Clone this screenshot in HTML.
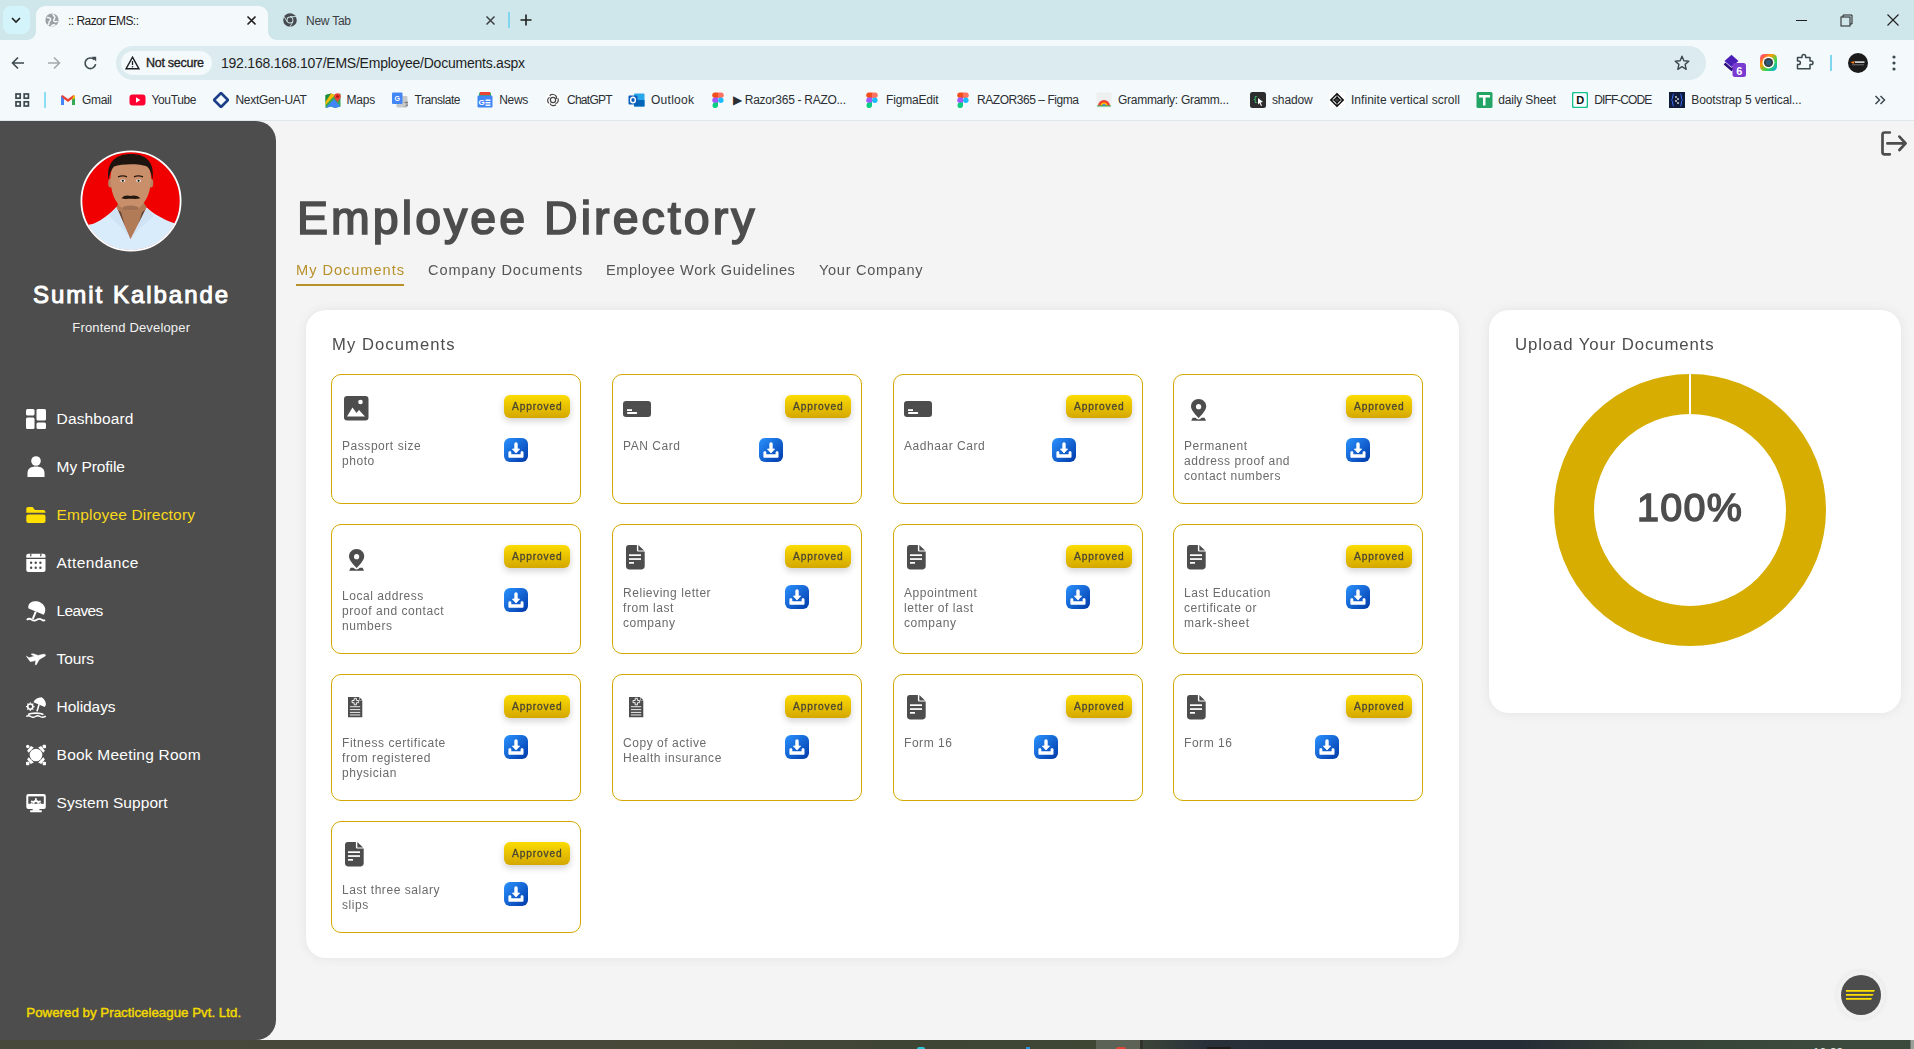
<!DOCTYPE html>
<html><head><meta charset="utf-8"><title>Razor EMS</title><style>
*{margin:0;padding:0;box-sizing:border-box}
html,body{width:1914px;height:1049px;overflow:hidden;background:#f4f4f4}
body{position:relative;font-family:"Liberation Sans",sans-serif}
.t{position:absolute;white-space:nowrap;line-height:1;font-family:"Liberation Sans",sans-serif}
</style></head><body><div id="root" style="position:absolute;left:0;top:0;width:1914px;height:1049px">
<div style="position:absolute;left:0;top:0;width:1914px;height:40px;background:#cfe6eb"></div>
<div style="position:absolute;left:3px;top:6px;width:27px;height:28px;border-radius:8px;background:#d4f4fb"></div>
<svg style="position:absolute;left:9px;top:13px" width="14" height="14" viewBox="0 0 14 14"><path d="M3 5 L7 9 L11 5" fill="none" stroke="#1f1f1f" stroke-width="1.6"/></svg>
<div style="position:absolute;left:36px;top:6px;width:232px;height:34px;border-radius:9px 9px 0 0;background:#f4f9fb"></div>
<div style="position:absolute;left:28px;top:32px;width:8px;height:8px;background:radial-gradient(circle at 0 0, #cfe6eb 7.5px, #f4f9fb 8px)"></div>
<div style="position:absolute;left:268px;top:32px;width:8px;height:8px;background:radial-gradient(circle at 100% 0, #cfe6eb 7.5px, #f4f9fb 8px)"></div>
<svg style="position:absolute;left:45px;top:13px" width="14" height="14" viewBox="0 0 14 14"><circle cx="7" cy="7" r="6.6" fill="#9aa0a6"/><path d="M1.8 4.6 C3.8 4.2 5.8 5 5.6 6.6 C5.4 8 3.6 8.2 4 10 C4.2 11 3.4 11.8 2.6 11.4 M7.8 0.8 C8 2.4 9.6 2.8 9.8 4.2 C10 5.6 8.4 6.4 8.8 7.8 C9.2 9 11 9 12.6 8.4 M6.2 13.2 C7.2 12 9 11.6 10.4 12.4" fill="none" stroke="#f4f9fb" stroke-width="1.5"/></svg>
<span class="t" style="left:68.00px;top:14.74px;font-size:12px;font-weight:400;color:#1f1f1f;letter-spacing:-0.541px;">:: Razor EMS::</span>
<svg style="position:absolute;left:246px;top:15px" width="11" height="11" viewBox="0 0 11 11"><path d="M1.5 1.5 L9.5 9.5 M9.5 1.5 L1.5 9.5" stroke="#1f1f1f" stroke-width="1.6"/></svg>
<svg style="position:absolute;left:283px;top:13px" width="14" height="14" viewBox="0 0 14 14"><circle cx="7" cy="7" r="6.8" fill="#474b4f"/><circle cx="7" cy="7" r="3.4" fill="#cfe6eb"/><circle cx="7" cy="7" r="2.5" fill="#474b4f"/><path d="M7 3.6 L13 3.6" stroke="#cfe6eb" stroke-width="0.9"/><path d="M4.1 8.7 L1.1 3.5" stroke="#cfe6eb" stroke-width="0.9"/><path d="M9.9 8.7 L6.9 13.9" stroke="#cfe6eb" stroke-width="0.9"/></svg>
<span class="t" style="left:306.00px;top:14.74px;font-size:12px;font-weight:400;color:#3c4043;letter-spacing:-0.247px;">New Tab</span>
<svg style="position:absolute;left:485px;top:15px" width="11" height="11" viewBox="0 0 11 11"><path d="M1.5 1.5 L9.5 9.5 M9.5 1.5 L1.5 9.5" stroke="#3c4043" stroke-width="1.5"/></svg>
<div style="position:absolute;left:508px;top:12px;width:2px;height:16px;background:#7fd6ee"></div>
<svg style="position:absolute;left:520px;top:14px" width="12" height="12" viewBox="0 0 12 12"><path d="M6 0.5 V11.5 M0.5 6 H11.5" stroke="#1f1f1f" stroke-width="1.6"/></svg>
<div style="position:absolute;left:1796px;top:20px;width:11px;height:1px;background:#1f1f1f"></div>
<svg style="position:absolute;left:1840px;top:14px" width="13" height="13" viewBox="0 0 13 13"><rect x="1" y="3" width="9" height="9" fill="none" stroke="#1f1f1f" stroke-width="1"/><path d="M3 3 V1 H12 V10 H10" fill="none" stroke="#1f1f1f" stroke-width="1"/></svg>
<svg style="position:absolute;left:1887px;top:14px" width="12" height="12" viewBox="0 0 12 12"><path d="M0.5 0.5 L11.5 11.5 M11.5 0.5 L0.5 11.5" stroke="#1f1f1f" stroke-width="1.1"/></svg>
<div style="position:absolute;left:0;top:40px;width:1914px;height:80px;background:#f4f9fb"></div>
<div style="position:absolute;left:0;top:120px;width:1914px;height:1px;background:#dfe6e9"></div>
<svg style="position:absolute;left:11px;top:56px" width="14" height="14" viewBox="0 0 14 14"><path d="M13 7 H1.5 M7 1.5 L1.5 7 L7 12.5" fill="none" stroke="#3c4a4f" stroke-width="1.6"/></svg>
<svg style="position:absolute;left:47px;top:56px" width="14" height="14" viewBox="0 0 14 14"><path d="M1 7 H12.5 M7 1.5 L12.5 7 L7 12.5" fill="none" stroke="#a3abaf" stroke-width="1.6"/></svg>
<svg style="position:absolute;left:83px;top:56px" width="15" height="15" viewBox="0 0 15 15"><path d="M12.6 8.2 A5.3 5.3 0 1 1 11.2 3.6" fill="none" stroke="#3c4a4f" stroke-width="1.6"/><path d="M8.6 0.8 H13.2 V5.4 Z" fill="#3c4a4f"/></svg>
<div style="position:absolute;left:116px;top:46px;width:1590px;height:34px;border-radius:17px;background:#dcebef"></div>
<div style="position:absolute;left:121px;top:51px;width:91px;height:24px;border-radius:12px;background:#f4f9fb"></div>
<svg style="position:absolute;left:125px;top:56px" width="15" height="14" viewBox="0 0 15 14"><path d="M7.5 1.2 L14 12.8 H1 Z" fill="none" stroke="#1f1f1f" stroke-width="1.4" stroke-linejoin="miter"/><path d="M7.5 5 V9" stroke="#1f1f1f" stroke-width="1.3"/><circle cx="7.5" cy="10.7" r="0.8" fill="#1f1f1f"/></svg>
<span class="t" style="left:146.00px;top:56.92px;font-size:12.5px;font-weight:400;color:#1f1f1f;letter-spacing:-0.273px;-webkit-text-stroke:0.35px #1f1f1f;">Not secure</span>
<span class="t" style="left:221.00px;top:55.95px;font-size:14px;font-weight:400;color:#1f1f1f;letter-spacing:-0.230px;">192.168.168.107/EMS/Employee/Documents.aspx</span>
<svg style="position:absolute;left:1674px;top:55px" width="16" height="16" viewBox="0 0 16 16"><path d="M8 1.2 L9.9 5.8 L14.8 6.2 L11.1 9.4 L12.2 14.3 L8 11.7 L3.8 14.3 L4.9 9.4 L1.2 6.2 L6.1 5.8 Z" fill="none" stroke="#3c4a4f" stroke-width="1.4" stroke-linejoin="round"/></svg>
<svg style="position:absolute;left:1723px;top:54px" width="24" height="24" viewBox="0 0 24 24"><path d="M1.5 7 L8.5 0.8 L15.5 7 L8.5 13 Z" fill="#4a1fb8"/><path d="M1.5 9.5 L8.5 15.5 L12 12.5" fill="none" stroke="#2c0f7a" stroke-width="2.5"/><rect x="9.5" y="9" width="13.5" height="14" rx="2.5" fill="#7a3cd0"/><text x="16.2" y="20.5" font-family="Liberation Sans" font-weight="700" font-size="11" fill="#fff" text-anchor="middle">6</text></svg>
<svg style="position:absolute;left:1760px;top:54px" width="17" height="17" viewBox="0 0 17 17"><defs><linearGradient id="rb" x1="0" y1="0" x2="1" y2="1"><stop offset="0" stop-color="#ff2d95"/><stop offset="0.35" stop-color="#ff9a00"/><stop offset="0.65" stop-color="#32d74b"/><stop offset="1" stop-color="#0aa0ff"/></linearGradient></defs><rect x="0" y="0" width="17" height="17" rx="4.5" fill="url(#rb)"/><circle cx="8.5" cy="8.5" r="6" fill="#fff"/><circle cx="8.5" cy="8.5" r="4.6" fill="#3a3f44"/><circle cx="8.5" cy="8.5" r="2.6" fill="#2b5c7e"/></svg>
<svg style="position:absolute;left:1796px;top:53px" width="18" height="18" viewBox="0 0 18 18"><path d="M1.5 4.5 H6 V3.2 A1.8 1.8 0 0 1 9.6 3.2 V4.5 H14 V8 H15.2 A1.8 1.8 0 0 1 15.2 11.6 H14 V15.8 H1.5 V11.6 H2.6 A1.8 1.8 0 0 0 2.6 8 H1.5 Z" fill="none" stroke="#3c4a4f" stroke-width="1.5" stroke-linejoin="round"/></svg>
<div style="position:absolute;left:1830px;top:55px;width:2px;height:16px;background:#7fd6ee"></div>
<svg style="position:absolute;left:1848px;top:53px" width="20" height="20" viewBox="0 0 20 20"><circle cx="10" cy="10" r="10" fill="#1b1b1b"/><path d="M2.5 9 L7 8 L5.5 11 Z" fill="#f07b24"/><rect x="7" y="8.3" width="9.5" height="1.6" fill="#ddd"/><rect x="4" y="11.5" width="12" height="0.7" fill="#999"/></svg>
<svg style="position:absolute;left:1891px;top:55px" width="6" height="16" viewBox="0 0 6 16"><circle cx="3" cy="2" r="1.6" fill="#3c4a4f"/><circle cx="3" cy="8" r="1.6" fill="#3c4a4f"/><circle cx="3" cy="14" r="1.6" fill="#3c4a4f"/></svg>
<svg style="position:absolute;left:15px;top:93px" width="15" height="14" viewBox="0 0 15 14"><g fill="none" stroke="#3c4a4f" stroke-width="1.7"><rect x="1" y="1" width="4.2" height="4.2"/><rect x="9.2" y="1" width="4.2" height="4.2"/><rect x="1" y="8.8" width="4.2" height="4.2"/><rect x="9.2" y="8.8" width="4.2" height="4.2"/></g></svg>
<div style="position:absolute;left:44px;top:92px;width:2px;height:16px;background:#8ce0f5"></div>
<div style="position:absolute;left:60px;top:92px;width:16px;height:16px"><svg width="16" height="16" viewBox="0 0 16 16"><path d="M1 4 V13 H4 V7 L8 10 L12 7 V13 H15 V4 L13.5 3 L8 7 L2.5 3 Z" fill="#ea4335"/><path d="M1 4 V13 H4 V7 Z" fill="#4285f4"/><path d="M12 7 V13 H15 V4 Z" fill="#34a853"/><path d="M13.5 3 L15 4 V6 L12 8 Z" fill="#fbbc04"/></svg></div>
<span class="t" style="left:82.00px;top:93.84px;font-size:12px;font-weight:400;color:#2b2f33;letter-spacing:-0.336px;">Gmail</span>
<div style="position:absolute;left:129px;top:92px;width:16px;height:16px"><svg width="17" height="16" viewBox="0 0 17 16"><rect x="0.5" y="2.5" width="16" height="11" rx="3" fill="#ff0033"/><path d="M7 5.3 L11.3 8 L7 10.7 Z" fill="#fff"/></svg></div>
<span class="t" style="left:151.50px;top:93.84px;font-size:12px;font-weight:400;color:#2b2f33;letter-spacing:-0.359px;">YouTube</span>
<div style="position:absolute;left:213px;top:92px;width:16px;height:16px"><svg width="16" height="16" viewBox="0 0 16 16"><path d="M8 1 L15 8 L8 15 L1 8 Z" fill="none" stroke="#1d3f8a" stroke-width="2.6" stroke-linejoin="round"/></svg></div>
<span class="t" style="left:235.50px;top:93.84px;font-size:12px;font-weight:400;color:#2b2f33;letter-spacing:-0.307px;">NextGen-UAT</span>
<div style="position:absolute;left:325px;top:92px;width:16px;height:16px"><svg width="16" height="16" viewBox="0 0 16 16"><path d="M0.5 3 L6 1.5 L10 3 L15.5 1.5 V14.5 L10 16 L6 14.5 L0.5 16 Z" fill="#34a853"/><path d="M0.5 16 L9 7 L15.5 14.5 L10 16 L6 14.5 Z" fill="#4285f4"/><path d="M0.5 3 L6 1.5 L8 4 L0.5 11 Z" fill="#1e8e3e"/><path d="M6 1.5 L10 3 L0.5 13 V10 Z" fill="#fbbc04"/><circle cx="12.5" cy="4.5" r="3.2" fill="#ea4335"/><path d="M10 6 L12.5 10.5 L15 6 Z" fill="#ea4335"/><circle cx="12.5" cy="4.5" r="1.2" fill="#a50e0e"/></svg></div>
<span class="t" style="left:346.40px;top:93.84px;font-size:12px;font-weight:400;color:#2b2f33;letter-spacing:-0.181px;">Maps</span>
<div style="position:absolute;left:392px;top:92px;width:16px;height:16px"><svg width="16" height="16" viewBox="0 0 16 16"><rect x="4.5" y="4" width="11" height="11.5" rx="1" fill="#c6c9cc"/><rect x="0" y="0.5" width="10.5" height="11.5" rx="1" fill="#4285f4"/><text x="5.2" y="9.2" font-family="Liberation Sans" font-weight="700" font-size="7" fill="#fff" text-anchor="middle">G</text><text x="11.5" y="13.5" font-family="Liberation Sans" font-size="6" fill="#555">文</text></svg></div>
<span class="t" style="left:414.50px;top:93.84px;font-size:12px;font-weight:400;color:#2b2f33;letter-spacing:-0.447px;">Translate</span>
<div style="position:absolute;left:477px;top:92px;width:16px;height:16px"><svg width="16" height="16" viewBox="0 0 16 16"><rect x="2" y="0.5" width="12" height="5" rx="1" fill="#34a853"/><rect x="3" y="0" width="10" height="3" fill="#ea4335"/><rect x="0.5" y="3.5" width="15" height="12" rx="1.2" fill="#4285f4"/><text x="4.5" y="12.8" font-family="Liberation Sans" font-weight="700" font-size="8" fill="#fff" text-anchor="middle">G</text><rect x="8.5" y="7.5" width="5" height="1.4" fill="#fff"/><rect x="8.5" y="10" width="5" height="1.4" fill="#fff"/><rect x="8.5" y="12.5" width="5" height="1.4" fill="#fff"/></svg></div>
<span class="t" style="left:499.30px;top:93.84px;font-size:12px;font-weight:400;color:#2b2f33;letter-spacing:-0.339px;">News</span>
<div style="position:absolute;left:545px;top:92px;width:16px;height:16px"><svg width="16" height="16" viewBox="0 0 16 16"><circle cx="8" cy="8" r="7.8" fill="#fff"/><g fill="none" stroke="#444" stroke-width="1.2"><path d="M8 2.5 C10.5 2.5 12 4.5 11.5 6.8"/><path d="M12.8 6.2 C14 8.5 13 11 10.5 11.8"/><path d="M11 12.8 C9 14.3 6 13.8 5 11.5"/><path d="M3.8 11.2 C2 9.5 2.3 6.5 4.5 5.2"/><path d="M4.8 4 C5.5 2.5 7 2.2 8 2.5"/><circle cx="8" cy="8" r="2.6"/></g></svg></div>
<span class="t" style="left:567.00px;top:93.84px;font-size:12px;font-weight:400;color:#2b2f33;letter-spacing:-0.736px;">ChatGPT</span>
<div style="position:absolute;left:628px;top:92px;width:16px;height:16px"><svg width="17" height="16" viewBox="0 0 17 16"><rect x="6" y="1.5" width="10.5" height="13" rx="1" fill="#28a8ea"/><rect x="6" y="8" width="10.5" height="6.5" fill="#0364b8"/><rect x="0.5" y="3.5" width="9" height="9" rx="1" fill="#0a5db8"/><ellipse cx="5" cy="8" rx="2.4" ry="2.8" fill="none" stroke="#fff" stroke-width="1.4"/></svg></div>
<span class="t" style="left:651.00px;top:93.84px;font-size:12px;font-weight:400;color:#2b2f33;letter-spacing:0.273px;">Outlook</span>
<div style="position:absolute;left:710px;top:92px;width:16px;height:16px"><svg width="16" height="16" viewBox="0 0 16 16"><path d="M5 0.5 H8 V6 H5 A2.75 2.75 0 0 1 5 0.5 Z" fill="#f24e1e"/><path d="M8 0.5 H11 A2.75 2.75 0 0 1 11 6 H8 Z" fill="#ff7262"/><path d="M5 5.5 H8 V11 H5 A2.75 2.75 0 0 1 5 5.5 Z" fill="#a259ff"/><circle cx="10.8" cy="8.25" r="2.75" fill="#1abcfe"/><path d="M5 10.5 H8 V13.25 A2.75 2.75 0 1 1 5 10.5 Z" fill="#0acf83"/></svg></div>
<span class="t" style="left:733.00px;top:93.84px;font-size:12px;font-weight:400;color:#2b2f33;letter-spacing:-0.283px;">&#9654; Razor365 - RAZO...</span>
<div style="position:absolute;left:864px;top:92px;width:16px;height:16px"><svg width="16" height="16" viewBox="0 0 16 16"><path d="M5 0.5 H8 V6 H5 A2.75 2.75 0 0 1 5 0.5 Z" fill="#f24e1e"/><path d="M8 0.5 H11 A2.75 2.75 0 0 1 11 6 H8 Z" fill="#ff7262"/><path d="M5 5.5 H8 V11 H5 A2.75 2.75 0 0 1 5 5.5 Z" fill="#a259ff"/><circle cx="10.8" cy="8.25" r="2.75" fill="#1abcfe"/><path d="M5 10.5 H8 V13.25 A2.75 2.75 0 1 1 5 10.5 Z" fill="#0acf83"/></svg></div>
<span class="t" style="left:886.00px;top:93.84px;font-size:12px;font-weight:400;color:#2b2f33;letter-spacing:-0.166px;">FigmaEdit</span>
<div style="position:absolute;left:955px;top:92px;width:16px;height:16px"><svg width="16" height="16" viewBox="0 0 16 16"><path d="M5 0.5 H8 V6 H5 A2.75 2.75 0 0 1 5 0.5 Z" fill="#f24e1e"/><path d="M8 0.5 H11 A2.75 2.75 0 0 1 11 6 H8 Z" fill="#ff7262"/><path d="M5 5.5 H8 V11 H5 A2.75 2.75 0 0 1 5 5.5 Z" fill="#a259ff"/><circle cx="10.8" cy="8.25" r="2.75" fill="#1abcfe"/><path d="M5 10.5 H8 V13.25 A2.75 2.75 0 1 1 5 10.5 Z" fill="#0acf83"/></svg></div>
<span class="t" style="left:977.00px;top:93.84px;font-size:12px;font-weight:400;color:#2b2f33;letter-spacing:-0.447px;">RAZOR365 – Figma</span>
<div style="position:absolute;left:1096px;top:92px;width:16px;height:16px"><svg width="16" height="16" viewBox="0 0 16 16"><rect x="0.5" y="0.5" width="15" height="15" fill="#eef0f0"/><path d="M2 14 A6 6 0 0 1 14 14 Z" fill="#ea4335"/><path d="M4.5 14 A3.5 3.5 0 0 1 11.5 14 Z" fill="#fbbc04"/><path d="M6 14 A2 2 0 0 1 10 14 Z" fill="#4285f4"/><rect x="1" y="13" width="14" height="2" fill="#34a853" opacity="0.5"/></svg></div>
<span class="t" style="left:1118.00px;top:93.84px;font-size:12px;font-weight:400;color:#2b2f33;letter-spacing:-0.278px;">Grammarly: Gramm...</span>
<div style="position:absolute;left:1250px;top:92px;width:16px;height:16px"><svg width="16" height="16" viewBox="0 0 16 16"><rect x="0" y="0" width="16" height="16" rx="2.5" fill="#2d2d2d"/><text x="3" y="9" font-family="Liberation Mono" font-size="8" fill="#3ddc84">{</text><path d="M8 6 L13 10 L10.5 10.5 L12 13.5 L11 14 L9.5 11 L8 12.5 Z" fill="#fff"/></svg></div>
<span class="t" style="left:1272.00px;top:93.84px;font-size:12px;font-weight:400;color:#2b2f33;letter-spacing:-0.135px;">shadow</span>
<div style="position:absolute;left:1329px;top:92px;width:16px;height:16px"><svg width="16" height="16" viewBox="0 0 16 16"><rect width="16" height="16" fill="#fff"/><path d="M8 1.8 L14.2 8 L8 14.2 L1.8 8 Z" fill="none" stroke="#111" stroke-width="1.5"/><path d="M8 5 L11 8 L8 11 L5 8 Z M1.8 8 H14.2 M8 1.8 V14.2" fill="none" stroke="#111" stroke-width="1.2"/></svg></div>
<span class="t" style="left:1351.00px;top:93.84px;font-size:12px;font-weight:400;color:#2b2f33;letter-spacing:0.033px;">Infinite vertical scroll</span>
<div style="position:absolute;left:1476px;top:92px;width:16px;height:16px"><svg width="17" height="16" viewBox="0 0 17 16"><rect x="0.5" y="0" width="16" height="16" rx="1.5" fill="#23a566"/><rect x="3" y="3" width="11" height="2.5" fill="#fff"/><rect x="7" y="3" width="2.5" height="10.5" fill="#fff"/></svg></div>
<span class="t" style="left:1498.30px;top:93.84px;font-size:12px;font-weight:400;color:#2b2f33;letter-spacing:-0.167px;">daily Sheet</span>
<div style="position:absolute;left:1572px;top:92px;width:16px;height:16px"><svg width="16" height="16" viewBox="0 0 16 16"><rect x="0.5" y="0.5" width="15" height="15" rx="2" fill="#fff" stroke="#17c28a" stroke-width="1.6"/><text x="8.2" y="12.3" font-family="Liberation Sans" font-weight="700" font-size="11" fill="#111" text-anchor="middle">D</text></svg></div>
<span class="t" style="left:1594.30px;top:93.84px;font-size:12px;font-weight:400;color:#2b2f33;letter-spacing:-0.916px;">DIFF-CODE</span>
<div style="position:absolute;left:1669px;top:92px;width:16px;height:16px"><svg width="16" height="16" viewBox="0 0 16 16"><rect width="16" height="16" fill="#0f1b3d"/><path d="M5 2 C3.5 2 3.8 4.5 3.5 6.5 C3.3 7.5 2.5 8 2.5 8 C2.5 8 3.3 8.5 3.5 9.5 C3.8 11.5 3.5 14 5 14 M11 2 C12.5 2 12.2 4.5 12.5 6.5 C12.7 7.5 13.5 8 13.5 8 C13.5 8 12.7 8.5 12.5 9.5 C12.2 11.5 12.5 14 11 14" fill="none" stroke="#3d6cff" stroke-width="1"/><circle cx="7" cy="5" r="1" fill="#ccc"/><circle cx="9" cy="7" r="1" fill="#ccc"/><circle cx="7" cy="9" r="1" fill="#ccc"/><circle cx="9" cy="11" r="1" fill="#ccc"/></svg></div>
<span class="t" style="left:1691.30px;top:93.84px;font-size:12px;font-weight:400;color:#2b2f33;letter-spacing:-0.110px;">Bootstrap 5 vertical...</span>
<svg style="position:absolute;left:1874px;top:94px" width="12" height="12" viewBox="0 0 12 12"><path d="M1.5 2 L5.5 6 L1.5 10 M6.5 2 L10.5 6 L6.5 10" fill="none" stroke="#3c4a4f" stroke-width="1.5"/></svg>
<div style="position:absolute;left:0;top:121px;width:1914px;height:919px;background:#f4f4f4"></div>
<div style="position:absolute;left:0;top:121px;width:276px;height:919px;background:#4d4d4d;border-radius:0 20px 20px 0"></div>
<svg style="position:absolute;left:80px;top:150px" width="102" height="102" viewBox="0 0 102 102">
<defs><clipPath id="pc"><circle cx="51" cy="51" r="49"/></clipPath></defs>
<g clip-path="url(#pc)">
<rect width="102" height="102" fill="#f00000"/>
<path d="M0 102 V77 C5 75 10 74.8 14 73.5 C22 70 30 64 36.4 57 L50.5 89 L66.7 57.6 C72 63 84 70 93 72.8 C97 74 100 75 102 76 V102 Z" fill="#d9ecfb"/>
<path d="M36.4 57 L50.5 89 L66.7 57.6 L62 50 H40 Z" fill="#b27b58"/>
<path d="M38 60 L45 76 L41 62 Z M65 60 L58 76 L62 62 Z" fill="#2a2a2a" opacity="0.6"/>
<path d="M36.4 57 L29 66 L43 79 L50.5 89 Z M66.7 57.6 L74 66 L59 79 L50.5 89 Z" fill="#cfe3f4"/>
<ellipse cx="30.5" cy="33" rx="2.3" ry="4.5" fill="#b98260"/><ellipse cx="71" cy="33" rx="2.3" ry="4.5" fill="#b98260"/>
<path d="M30.5 28 C30.5 14 39 8 50.5 8 C62 8 71 14 71 28 C71 42 66 52 60 57 C56 60 53 61 50.5 61 C48 61 45 60 41 57 C35 52 30.5 42 30.5 28 Z" fill="#c98f6a"/>
<path d="M28.5 30 C26 12 36 4 51 4 C66 4 75 12 72.5 30 C71.5 24 70.5 19.5 67 16.5 C60 13.5 42 13.5 34 16.5 C31 19.5 29.5 24 28.5 30 Z" fill="#1d1410"/>
<path d="M38 26.8 Q43 25 47 26.8 M54 26.8 Q58 25 63 26.8" fill="none" stroke="#2a1a12" stroke-width="1.3"/>
<ellipse cx="42.8" cy="30.8" rx="2.5" ry="1.4" fill="#f4f0ee"/><ellipse cx="58.6" cy="30.8" rx="2.5" ry="1.4" fill="#f4f0ee"/>
<circle cx="42.8" cy="30.8" r="1.15" fill="#1a1a1a"/><circle cx="58.6" cy="30.8" r="1.15" fill="#1a1a1a"/>
<path d="M41.5 48.2 C44 45 48 45 50.5 46 C53 45 57 45 60.5 48.2 C57 49.3 53 48.8 50.5 48.8 C48 48.8 44 49.3 41.5 48.2 Z" fill="#24170f"/>
<ellipse cx="50.5" cy="58" rx="8" ry="2.5" fill="#7d573f" opacity="0.55"/>
</g>
<circle cx="51" cy="51" r="49.6" fill="none" stroke="#ffffff" stroke-width="1.8"/>
<g></g></svg>
<span class="t" style="left:33.00px;top:283.48px;font-size:24px;font-weight:400;color:#ffffff;letter-spacing:1.981px;-webkit-text-stroke:1px #ffffff;">Sumit Kalbande</span>
<span class="t" style="left:72.30px;top:320.70px;font-size:13px;font-weight:400;color:#f2f2f2;letter-spacing:0.164px;">Frontend Developer</span>
<div style="position:absolute;left:26px;top:409px;width:20px;height:22px;line-height:0"><svg width="20" height="20" viewBox="0 0 20 20"><g fill="#fff"><rect x="0" y="0" width="8.5" height="6.5" rx="1.5"/><rect x="0" y="8.5" width="8.5" height="11.5" rx="1.5"/><rect x="10.5" y="0" width="9.5" height="11.5" rx="1.5"/><rect x="10.5" y="13.5" width="9.5" height="6.5" rx="1.5"/></g></svg></div>
<span class="t" style="left:56.60px;top:410.88px;font-size:15.5px;font-weight:400;color:#ffffff;letter-spacing:0.121px;">Dashboard</span>
<div style="position:absolute;left:26px;top:456px;width:20px;height:22px;line-height:0"><svg width="20" height="21" viewBox="0 0 20 21"><g fill="#fff"><circle cx="10" cy="5" r="4.8"/><path d="M1.5 21 V17 C1.5 12.5 5 10.5 10 10.5 C15 10.5 18.5 12.5 18.5 17 V21 Z" rx="2"/></g></svg></div>
<span class="t" style="left:56.60px;top:458.88px;font-size:15.5px;font-weight:400;color:#ffffff;letter-spacing:-0.056px;">My Profile</span>
<div style="position:absolute;left:26px;top:506px;width:20px;height:22px;line-height:0"><svg width="20" height="18" viewBox="0 0 20 18"><g fill="#ffe000"><path d="M0.3 2.9 C0.3 1.6 1.1 0.9 2.3 0.9 H6.6 L8.9 3.9 H17.4 C18.7 3.9 19.5 4.9 19.5 6.8 H0.3 Z"/><rect x="0.3" y="8.4" width="19.2" height="8.6" rx="2"/></g></svg></div>
<span class="t" style="left:56.60px;top:506.88px;font-size:15.5px;font-weight:400;color:#f8d81b;letter-spacing:0.185px;">Employee Directory</span>
<div style="position:absolute;left:26px;top:553px;width:20px;height:22px;line-height:0"><svg width="20" height="20" viewBox="0 0 20 20"><path d="M2.3 0.8 H17.5 C18.6 0.8 19.5 1.7 19.5 2.8 V4.8 H0.3 V2.8 C0.3 1.7 1.2 0.8 2.3 0.8 Z" fill="#fff"/><path d="M0.3 6 H19.5 V17 C19.5 18.1 18.6 19 17.5 19 H2.3 C1.2 19 0.3 18.1 0.3 17 Z" fill="#fff"/><g fill="#4d4d4d"><rect x="4.2" y="0.6" width="1.2" height="2.8"/><rect x="14.2" y="0.6" width="1.2" height="2.8"/><circle cx="5.1" cy="9.7" r="1.2"/><circle cx="9.7" cy="9.7" r="1.2"/><circle cx="14.4" cy="9.7" r="1.2"/><circle cx="5.1" cy="14.8" r="1.2"/><circle cx="9.7" cy="14.8" r="1.2"/><circle cx="14.4" cy="14.8" r="1.2"/></g></svg></div>
<span class="t" style="left:56.60px;top:554.88px;font-size:15.5px;font-weight:400;color:#ffffff;letter-spacing:0.374px;">Attendance</span>
<div style="position:absolute;left:26px;top:600px;width:20px;height:22px;line-height:0"><svg width="20" height="22" viewBox="0 0 20 22"><path d="M2.6 8.4 C1.5 6.5 3 2.5 7 1.5 C11.5 0.3 16.5 2.5 18.5 6.5 C19.8 9.2 19.5 12.5 17.7 14.7 Z" fill="#fff"/><path d="M9.8 11.6 L6.8 18.8" stroke="#fff" stroke-width="2"/><path d="M0.8 19.8 C2.5 18.3 4 18.3 5.8 19.8 C7.5 21 9 21 10.8 19.8 C12.5 18.5 14 18.5 15.8 19.8 C17 20.7 18 20.7 19 19.8" fill="none" stroke="#fff" stroke-width="1.8"/></svg></div>
<span class="t" style="left:56.60px;top:602.88px;font-size:15.5px;font-weight:400;color:#ffffff;letter-spacing:-0.677px;">Leaves</span>
<div style="position:absolute;left:26px;top:652px;width:20px;height:22px;line-height:0"><svg width="20" height="14" viewBox="0 0 20 14"><path d="M0.5 4.2 L3 5.8 L8.5 4.2 L5.1 2.2 L7 1.8 L12 3.5 L17.5 2.3 C19 2 20 2.8 19.2 3.9 L13.2 7.5 L10.2 12.8 L9.3 12.6 L9.9 8.5 L4.2 9.6 Z" fill="#fff" stroke="#fff" stroke-width="0.6" stroke-linejoin="round"/></svg></div>
<span class="t" style="left:56.60px;top:650.88px;font-size:15.5px;font-weight:400;color:#ffffff;letter-spacing:-0.152px;">Tours</span>
<div style="position:absolute;left:26px;top:697px;width:20px;height:22px;line-height:0"><svg width="20" height="21" viewBox="0 0 20 21"><path d="M7.5 5.3 C8.5 2.5 11.5 0.6 15.5 0.3 C18.2 1.8 20.2 5 19.8 8 L18.7 9.9 Z" fill="#fff"/><path d="M13.1 7.2 L11 14.4" stroke="#fff" stroke-width="1.6"/><circle cx="4.3" cy="9.6" r="2.6" fill="none" stroke="#fff" stroke-width="1.6"/><g stroke="#fff" stroke-width="1.1"><path d="M4.3 5.3 V6.4 M4.3 12.8 V13.9 M0 9.6 H1.1 M7.5 9.6 H8.6 M1.3 6.6 L2 7.3 M6.6 11.9 L7.3 12.6 M1.3 12.6 L2 11.9 M6.6 7.3 L7.3 6.6"/></g><path d="M2.1 17.6 C5 15.6 14.5 15.6 17.4 17.6" fill="none" stroke="#fff" stroke-width="1.7"/><path d="M0.2 19.5 C1.8 18.4 3.2 18.4 4.8 19.5 C6.4 20.6 7.8 20.6 9.4 19.5 C11 18.4 12.4 18.4 14 19.5 C15.6 20.6 17 20.6 19.8 19.2" fill="none" stroke="#fff" stroke-width="1.5"/></svg></div>
<span class="t" style="left:56.60px;top:698.88px;font-size:15.5px;font-weight:400;color:#ffffff;letter-spacing:-0.065px;">Holidays</span>
<div style="position:absolute;left:26px;top:744px;width:20px;height:22px;line-height:0"><svg width="20" height="22" viewBox="0 0 20 22"><g fill="#fff"><circle cx="10" cy="11" r="6.3"/><circle cx="1.7" cy="2.5" r="1.7"/><rect x="16.6" y="0.8" width="3.4" height="3.4" rx="0.8"/><rect x="0" y="17.8" width="3.4" height="3.4" rx="0.8"/><rect x="16.6" y="17.8" width="3.4" height="3.4" rx="0.8"/><path d="M1.1 6.7 L4.8 2 L7.8 3.5 L2.7 8.8 Z"/><path d="M18.9 6.7 L15.2 2 L12.2 3.5 L17.3 8.8 Z"/><path d="M1.1 15.3 L4.8 20 L7.8 18.5 L2.7 13.2 Z"/><path d="M18.9 15.3 L15.2 20 L12.2 18.5 L17.3 13.2 Z"/></g></svg></div>
<span class="t" style="left:56.60px;top:746.88px;font-size:15.5px;font-weight:400;color:#ffffff;letter-spacing:0.223px;">Book Meeting Room</span>
<div style="position:absolute;left:26px;top:793px;width:20px;height:22px;line-height:0"><svg width="20" height="20" viewBox="0 0 20 20"><defs><clipPath id="scr"><rect x="2.3" y="4.1" width="15.5" height="6.7"/></clipPath></defs><rect x="0.3" y="0.9" width="19.5" height="15.1" rx="2" fill="#fff"/><rect x="2.3" y="3.4" width="15.5" height="7.4" fill="#4d4d4d"/><g clip-path="url(#scr)"><circle cx="9.9" cy="10.6" r="3.6" fill="#fff"/><g stroke="#fff" stroke-width="1.8"><path d="M9.9 5.2 V7 M5.2 8 L6.7 8.9 M14.6 8 L13.1 8.9 M4.6 10.6 H6 M15.2 10.6 H13.8"/></g><circle cx="9.9" cy="10.6" r="1.6" fill="#4d4d4d"/></g><rect x="6.7" y="15.5" width="6.7" height="2.2" fill="#fff"/><rect x="4" y="17.3" width="12" height="1.9" rx="0.9" fill="#fff"/></svg></div>
<span class="t" style="left:56.60px;top:794.88px;font-size:15.5px;font-weight:400;color:#ffffff;letter-spacing:0.055px;">System Support</span>
<span class="t" style="left:26.30px;top:1006.04px;font-size:13.3px;font-weight:400;color:#f2d900;letter-spacing:0.013px;-webkit-text-stroke:0.45px #f2d900;">Powered by Practiceleague Pvt. Ltd.</span>
<div style="position:absolute;left:0;top:1040px;width:1914px;height:9px;background:linear-gradient(90deg,#49493b 0px,#474838 700px,#3f4534 880px,#3f4634 1096px,#5d6257 1096px,#5d6257 1140px,#2f332c 1140px,#2f332c 1143px,#3c4538 1143px,#2a303a 1205px,#262c36 1300px,#262c36 1520px,#354036 1640px,#3b4a3c 1800px,#3c4a3d 1910px,#9aa09a 1911px)"></div>
<div style="position:absolute;left:917px;top:1047px;width:8px;height:2px;background:#2bc4d8;border-radius:2px 2px 0 0"></div>
<div style="position:absolute;left:1026px;top:1047px;width:4px;height:2px;background:#2f8fe0"></div>
<div style="position:absolute;left:1116px;top:1047px;width:10px;height:2px;background:#e0453a;border-radius:3px 3px 0 0"></div>
<div style="position:absolute;left:1207px;top:1047px;width:24px;height:2px;background:#1c1c1c"></div>
<div style="position:absolute;left:1812px;top:1040px;width:34px;height:9px;overflow:hidden"><span style="position:absolute;left:1px;top:5.5px;font-family:Liberation Sans;font-size:11.5px;line-height:12px;color:#e8ece8;letter-spacing:0.3px">10:22</span></div>
<span class="t" style="left:296.90px;top:195.04px;font-size:46.5px;font-weight:400;color:#4d4d4d;letter-spacing:3.046px;-webkit-text-stroke:1.7px #4d4d4d;will-change:transform;">Employee Directory</span>
<span class="t" style="left:296.20px;top:263.24px;font-size:14.6px;font-weight:400;color:#b8912a;letter-spacing:0.970px;will-change:transform;">My Documents</span>
<span class="t" style="left:427.50px;top:263.24px;font-size:14.6px;font-weight:400;color:#555555;letter-spacing:0.867px;will-change:transform;">Company Documents</span>
<span class="t" style="left:605.80px;top:263.24px;font-size:14.6px;font-weight:400;color:#555555;letter-spacing:0.572px;will-change:transform;">Employee Work Guidelines</span>
<span class="t" style="left:818.70px;top:263.24px;font-size:14.6px;font-weight:400;color:#555555;letter-spacing:0.682px;will-change:transform;">Your Company</span>
<div style="position:absolute;left:296px;top:283.5px;width:108px;height:2px;background:#b8912a"></div>
<div style="position:absolute;left:306px;top:310px;width:1153px;height:648px;background:#fff;border-radius:20px;box-shadow:0 0 12px rgba(0,0,0,0.07)"></div>
<span class="t" style="left:332.00px;top:337.05px;font-size:16.6px;font-weight:400;color:#4d4d4d;letter-spacing:1.077px;will-change:transform;">My Documents</span>
<div style="position:absolute;left:331px;top:374px;width:250px;height:130px;border:1px solid #d3a800;border-radius:10px;background:#fff"></div>
<div style="position:absolute;left:343.8px;top:395.9px;line-height:0"><svg width="25" height="25" viewBox="0 0 25 25"><rect x="0" y="0" width="24.5" height="24.5" rx="3.2" fill="#4d4d4d"/><circle cx="16.5" cy="6" r="2.3" fill="#fff"/><path d="M3 20.5 L8.5 11.5 L12.5 17 L15 14 L21 20.5 Z" fill="#fff"/></svg></div>
<div style="position:absolute;left:504px;top:395px;width:66px;height:23px;border-radius:6px;background:linear-gradient(180deg,#fbdc00,#d4a700);box-shadow:0 3px 7px rgba(0,0,0,0.18)"></div>
<span class="t" style="left:511.80px;top:401.57px;font-size:10.2px;font-weight:400;color:#4a4632;letter-spacing:0.854px;-webkit-text-stroke:0.3px #4a4632;will-change:transform;">Approved</span>
<span class="t" style="left:341.90px;top:440.44px;font-size:12px;font-weight:400;color:#6b6b6b;letter-spacing:0.55px;will-change:transform;">Passport size</span>
<span class="t" style="left:341.90px;top:455.44px;font-size:12px;font-weight:400;color:#6b6b6b;letter-spacing:0.55px;will-change:transform;">photo</span>
<div style="position:absolute;left:504px;top:438px;line-height:0"><svg width="24" height="24" viewBox="0 0 24 24"><defs><linearGradient id="dlg" x1="0" y1="0" x2="1" y2="1"><stop offset="0" stop-color="#2a93ff"/><stop offset="1" stop-color="#0038a8"/></linearGradient></defs><rect width="24" height="24" rx="6" fill="url(#dlg)"/><g fill="#fff"><rect x="10.3" y="4.3" width="3.4" height="8.5" rx="1.7"/><path d="M8.4 11 H15.6 L12 15 Z" stroke="#fff" stroke-width="0.8" stroke-linejoin="round"/><path d="M4.4 14.6 C4.4 13.8 5 13.3 5.85 13.3 C6.7 13.3 7.3 13.8 7.3 14.6 V16.3 H16.6 V14.6 C16.6 13.8 17.2 13.3 18.05 13.3 C18.9 13.3 19.5 13.8 19.5 14.6 V18.7 C19.5 19.3 19.1 19.7 18.5 19.7 H5.4 C4.8 19.7 4.4 19.3 4.4 18.7 Z"/></g></svg></div>
<div style="position:absolute;left:612px;top:374px;width:250px;height:130px;border:1px solid #d3a800;border-radius:10px;background:#fff"></div>
<div style="position:absolute;left:623.1px;top:401px;line-height:0"><svg width="28" height="16" viewBox="0 0 28 16"><rect x="0" y="0" width="28" height="16" rx="3" fill="#4d4d4d"/><rect x="4" y="8.2" width="5" height="1.8" fill="#fff"/><rect x="4" y="11.1" width="10.2" height="1.8" rx="0.9" fill="#fff"/></svg></div>
<div style="position:absolute;left:785px;top:395px;width:66px;height:23px;border-radius:6px;background:linear-gradient(180deg,#fbdc00,#d4a700);box-shadow:0 3px 7px rgba(0,0,0,0.18)"></div>
<span class="t" style="left:792.80px;top:401.57px;font-size:10.2px;font-weight:400;color:#4a4632;letter-spacing:0.854px;-webkit-text-stroke:0.3px #4a4632;will-change:transform;">Approved</span>
<span class="t" style="left:622.90px;top:440.44px;font-size:12px;font-weight:400;color:#6b6b6b;letter-spacing:0.55px;will-change:transform;">PAN Card</span>
<div style="position:absolute;left:759px;top:438px;line-height:0"><svg width="24" height="24" viewBox="0 0 24 24"><defs><linearGradient id="dlg" x1="0" y1="0" x2="1" y2="1"><stop offset="0" stop-color="#2a93ff"/><stop offset="1" stop-color="#0038a8"/></linearGradient></defs><rect width="24" height="24" rx="6" fill="url(#dlg)"/><g fill="#fff"><rect x="10.3" y="4.3" width="3.4" height="8.5" rx="1.7"/><path d="M8.4 11 H15.6 L12 15 Z" stroke="#fff" stroke-width="0.8" stroke-linejoin="round"/><path d="M4.4 14.6 C4.4 13.8 5 13.3 5.85 13.3 C6.7 13.3 7.3 13.8 7.3 14.6 V16.3 H16.6 V14.6 C16.6 13.8 17.2 13.3 18.05 13.3 C18.9 13.3 19.5 13.8 19.5 14.6 V18.7 C19.5 19.3 19.1 19.7 18.5 19.7 H5.4 C4.8 19.7 4.4 19.3 4.4 18.7 Z"/></g></svg></div>
<div style="position:absolute;left:893px;top:374px;width:250px;height:130px;border:1px solid #d3a800;border-radius:10px;background:#fff"></div>
<div style="position:absolute;left:904.1px;top:401px;line-height:0"><svg width="28" height="16" viewBox="0 0 28 16"><rect x="0" y="0" width="28" height="16" rx="3" fill="#4d4d4d"/><rect x="4" y="8.2" width="5" height="1.8" fill="#fff"/><rect x="4" y="11.1" width="10.2" height="1.8" rx="0.9" fill="#fff"/></svg></div>
<div style="position:absolute;left:1066px;top:395px;width:66px;height:23px;border-radius:6px;background:linear-gradient(180deg,#fbdc00,#d4a700);box-shadow:0 3px 7px rgba(0,0,0,0.18)"></div>
<span class="t" style="left:1073.80px;top:401.57px;font-size:10.2px;font-weight:400;color:#4a4632;letter-spacing:0.854px;-webkit-text-stroke:0.3px #4a4632;will-change:transform;">Approved</span>
<span class="t" style="left:903.90px;top:440.44px;font-size:12px;font-weight:400;color:#6b6b6b;letter-spacing:0.55px;will-change:transform;">Aadhaar Card</span>
<div style="position:absolute;left:1052px;top:438px;line-height:0"><svg width="24" height="24" viewBox="0 0 24 24"><defs><linearGradient id="dlg" x1="0" y1="0" x2="1" y2="1"><stop offset="0" stop-color="#2a93ff"/><stop offset="1" stop-color="#0038a8"/></linearGradient></defs><rect width="24" height="24" rx="6" fill="url(#dlg)"/><g fill="#fff"><rect x="10.3" y="4.3" width="3.4" height="8.5" rx="1.7"/><path d="M8.4 11 H15.6 L12 15 Z" stroke="#fff" stroke-width="0.8" stroke-linejoin="round"/><path d="M4.4 14.6 C4.4 13.8 5 13.3 5.85 13.3 C6.7 13.3 7.3 13.8 7.3 14.6 V16.3 H16.6 V14.6 C16.6 13.8 17.2 13.3 18.05 13.3 C18.9 13.3 19.5 13.8 19.5 14.6 V18.7 C19.5 19.3 19.1 19.7 18.5 19.7 H5.4 C4.8 19.7 4.4 19.3 4.4 18.7 Z"/></g></svg></div>
<div style="position:absolute;left:1173px;top:374px;width:250px;height:130px;border:1px solid #d3a800;border-radius:10px;background:#fff"></div>
<div style="position:absolute;left:1190.8px;top:398.5px;line-height:0"><svg width="16" height="22" viewBox="0 0 16 22"><path d="M7.6 0 C3.3 0 0 3.2 0 7.5 C0 12 7.6 19 7.6 19 C7.6 19 15.2 12 15.2 7.5 C15.2 3.2 11.9 0 7.6 0 Z" fill="#4d4d4d"/><circle cx="7.6" cy="7.7" r="2.6" fill="#fff"/><path d="M0.2 21.8 L1.6 18.8 H4.6 C5.6 19.8 6.4 20.4 7.6 20.4 C8.8 20.4 9.6 19.8 10.6 18.8 H13.6 L15 21.8 Z" fill="#4d4d4d"/></svg></div>
<div style="position:absolute;left:1346px;top:395px;width:66px;height:23px;border-radius:6px;background:linear-gradient(180deg,#fbdc00,#d4a700);box-shadow:0 3px 7px rgba(0,0,0,0.18)"></div>
<span class="t" style="left:1353.80px;top:401.57px;font-size:10.2px;font-weight:400;color:#4a4632;letter-spacing:0.854px;-webkit-text-stroke:0.3px #4a4632;will-change:transform;">Approved</span>
<span class="t" style="left:1183.90px;top:440.44px;font-size:12px;font-weight:400;color:#6b6b6b;letter-spacing:0.55px;will-change:transform;">Permanent</span>
<span class="t" style="left:1183.90px;top:455.44px;font-size:12px;font-weight:400;color:#6b6b6b;letter-spacing:0.55px;will-change:transform;">address proof and</span>
<span class="t" style="left:1183.90px;top:470.44px;font-size:12px;font-weight:400;color:#6b6b6b;letter-spacing:0.55px;will-change:transform;">contact numbers</span>
<div style="position:absolute;left:1346px;top:438px;line-height:0"><svg width="24" height="24" viewBox="0 0 24 24"><defs><linearGradient id="dlg" x1="0" y1="0" x2="1" y2="1"><stop offset="0" stop-color="#2a93ff"/><stop offset="1" stop-color="#0038a8"/></linearGradient></defs><rect width="24" height="24" rx="6" fill="url(#dlg)"/><g fill="#fff"><rect x="10.3" y="4.3" width="3.4" height="8.5" rx="1.7"/><path d="M8.4 11 H15.6 L12 15 Z" stroke="#fff" stroke-width="0.8" stroke-linejoin="round"/><path d="M4.4 14.6 C4.4 13.8 5 13.3 5.85 13.3 C6.7 13.3 7.3 13.8 7.3 14.6 V16.3 H16.6 V14.6 C16.6 13.8 17.2 13.3 18.05 13.3 C18.9 13.3 19.5 13.8 19.5 14.6 V18.7 C19.5 19.3 19.1 19.7 18.5 19.7 H5.4 C4.8 19.7 4.4 19.3 4.4 18.7 Z"/></g></svg></div>
<div style="position:absolute;left:331px;top:524px;width:250px;height:130px;border:1px solid #d3a800;border-radius:10px;background:#fff"></div>
<div style="position:absolute;left:348.8px;top:548.5px;line-height:0"><svg width="16" height="22" viewBox="0 0 16 22"><path d="M7.6 0 C3.3 0 0 3.2 0 7.5 C0 12 7.6 19 7.6 19 C7.6 19 15.2 12 15.2 7.5 C15.2 3.2 11.9 0 7.6 0 Z" fill="#4d4d4d"/><circle cx="7.6" cy="7.7" r="2.6" fill="#fff"/><path d="M0.2 21.8 L1.6 18.8 H4.6 C5.6 19.8 6.4 20.4 7.6 20.4 C8.8 20.4 9.6 19.8 10.6 18.8 H13.6 L15 21.8 Z" fill="#4d4d4d"/></svg></div>
<div style="position:absolute;left:504px;top:545px;width:66px;height:23px;border-radius:6px;background:linear-gradient(180deg,#fbdc00,#d4a700);box-shadow:0 3px 7px rgba(0,0,0,0.18)"></div>
<span class="t" style="left:511.80px;top:551.57px;font-size:10.2px;font-weight:400;color:#4a4632;letter-spacing:0.854px;-webkit-text-stroke:0.3px #4a4632;will-change:transform;">Approved</span>
<span class="t" style="left:341.90px;top:590.44px;font-size:12px;font-weight:400;color:#6b6b6b;letter-spacing:0.55px;will-change:transform;">Local address</span>
<span class="t" style="left:341.90px;top:605.44px;font-size:12px;font-weight:400;color:#6b6b6b;letter-spacing:0.55px;will-change:transform;">proof and contact</span>
<span class="t" style="left:341.90px;top:620.44px;font-size:12px;font-weight:400;color:#6b6b6b;letter-spacing:0.55px;will-change:transform;">numbers</span>
<div style="position:absolute;left:504px;top:588px;line-height:0"><svg width="24" height="24" viewBox="0 0 24 24"><defs><linearGradient id="dlg" x1="0" y1="0" x2="1" y2="1"><stop offset="0" stop-color="#2a93ff"/><stop offset="1" stop-color="#0038a8"/></linearGradient></defs><rect width="24" height="24" rx="6" fill="url(#dlg)"/><g fill="#fff"><rect x="10.3" y="4.3" width="3.4" height="8.5" rx="1.7"/><path d="M8.4 11 H15.6 L12 15 Z" stroke="#fff" stroke-width="0.8" stroke-linejoin="round"/><path d="M4.4 14.6 C4.4 13.8 5 13.3 5.85 13.3 C6.7 13.3 7.3 13.8 7.3 14.6 V16.3 H16.6 V14.6 C16.6 13.8 17.2 13.3 18.05 13.3 C18.9 13.3 19.5 13.8 19.5 14.6 V18.7 C19.5 19.3 19.1 19.7 18.5 19.7 H5.4 C4.8 19.7 4.4 19.3 4.4 18.7 Z"/></g></svg></div>
<div style="position:absolute;left:612px;top:524px;width:250px;height:130px;border:1px solid #d3a800;border-radius:10px;background:#fff"></div>
<div style="position:absolute;left:626px;top:545px;line-height:0"><svg width="19" height="25" viewBox="0 0 19 25"><path d="M2.8 0 H10.9 V5 C10.9 6 11.6 6.6 12.5 6.6 H18.7 V21.6 C18.7 23.2 17.4 24.4 15.9 24.4 H2.8 C1.2 24.4 0 23.2 0 21.6 V2.8 C0 1.2 1.2 0 2.8 0 Z" fill="#4d4d4d"/><path d="M12.3 0 L18.1 5.6 H12.3 Z" fill="#4d4d4d"/><rect x="3" y="9.3" width="12" height="1.7" fill="#fff"/><rect x="3" y="13.2" width="12" height="1.7" fill="#fff"/><rect x="3" y="17" width="5" height="1.7" fill="#fff"/></svg></div>
<div style="position:absolute;left:785px;top:545px;width:66px;height:23px;border-radius:6px;background:linear-gradient(180deg,#fbdc00,#d4a700);box-shadow:0 3px 7px rgba(0,0,0,0.18)"></div>
<span class="t" style="left:792.80px;top:551.57px;font-size:10.2px;font-weight:400;color:#4a4632;letter-spacing:0.854px;-webkit-text-stroke:0.3px #4a4632;will-change:transform;">Approved</span>
<span class="t" style="left:622.90px;top:587.44px;font-size:12px;font-weight:400;color:#6b6b6b;letter-spacing:0.55px;will-change:transform;">Relieving letter</span>
<span class="t" style="left:622.90px;top:602.44px;font-size:12px;font-weight:400;color:#6b6b6b;letter-spacing:0.55px;will-change:transform;">from last</span>
<span class="t" style="left:622.90px;top:617.44px;font-size:12px;font-weight:400;color:#6b6b6b;letter-spacing:0.55px;will-change:transform;">company</span>
<div style="position:absolute;left:785px;top:585px;line-height:0"><svg width="24" height="24" viewBox="0 0 24 24"><defs><linearGradient id="dlg" x1="0" y1="0" x2="1" y2="1"><stop offset="0" stop-color="#2a93ff"/><stop offset="1" stop-color="#0038a8"/></linearGradient></defs><rect width="24" height="24" rx="6" fill="url(#dlg)"/><g fill="#fff"><rect x="10.3" y="4.3" width="3.4" height="8.5" rx="1.7"/><path d="M8.4 11 H15.6 L12 15 Z" stroke="#fff" stroke-width="0.8" stroke-linejoin="round"/><path d="M4.4 14.6 C4.4 13.8 5 13.3 5.85 13.3 C6.7 13.3 7.3 13.8 7.3 14.6 V16.3 H16.6 V14.6 C16.6 13.8 17.2 13.3 18.05 13.3 C18.9 13.3 19.5 13.8 19.5 14.6 V18.7 C19.5 19.3 19.1 19.7 18.5 19.7 H5.4 C4.8 19.7 4.4 19.3 4.4 18.7 Z"/></g></svg></div>
<div style="position:absolute;left:893px;top:524px;width:250px;height:130px;border:1px solid #d3a800;border-radius:10px;background:#fff"></div>
<div style="position:absolute;left:907px;top:545px;line-height:0"><svg width="19" height="25" viewBox="0 0 19 25"><path d="M2.8 0 H10.9 V5 C10.9 6 11.6 6.6 12.5 6.6 H18.7 V21.6 C18.7 23.2 17.4 24.4 15.9 24.4 H2.8 C1.2 24.4 0 23.2 0 21.6 V2.8 C0 1.2 1.2 0 2.8 0 Z" fill="#4d4d4d"/><path d="M12.3 0 L18.1 5.6 H12.3 Z" fill="#4d4d4d"/><rect x="3" y="9.3" width="12" height="1.7" fill="#fff"/><rect x="3" y="13.2" width="12" height="1.7" fill="#fff"/><rect x="3" y="17" width="5" height="1.7" fill="#fff"/></svg></div>
<div style="position:absolute;left:1066px;top:545px;width:66px;height:23px;border-radius:6px;background:linear-gradient(180deg,#fbdc00,#d4a700);box-shadow:0 3px 7px rgba(0,0,0,0.18)"></div>
<span class="t" style="left:1073.80px;top:551.57px;font-size:10.2px;font-weight:400;color:#4a4632;letter-spacing:0.854px;-webkit-text-stroke:0.3px #4a4632;will-change:transform;">Approved</span>
<span class="t" style="left:903.90px;top:587.44px;font-size:12px;font-weight:400;color:#6b6b6b;letter-spacing:0.55px;will-change:transform;">Appointment</span>
<span class="t" style="left:903.90px;top:602.44px;font-size:12px;font-weight:400;color:#6b6b6b;letter-spacing:0.55px;will-change:transform;">letter of last</span>
<span class="t" style="left:903.90px;top:617.44px;font-size:12px;font-weight:400;color:#6b6b6b;letter-spacing:0.55px;will-change:transform;">company</span>
<div style="position:absolute;left:1066px;top:585px;line-height:0"><svg width="24" height="24" viewBox="0 0 24 24"><defs><linearGradient id="dlg" x1="0" y1="0" x2="1" y2="1"><stop offset="0" stop-color="#2a93ff"/><stop offset="1" stop-color="#0038a8"/></linearGradient></defs><rect width="24" height="24" rx="6" fill="url(#dlg)"/><g fill="#fff"><rect x="10.3" y="4.3" width="3.4" height="8.5" rx="1.7"/><path d="M8.4 11 H15.6 L12 15 Z" stroke="#fff" stroke-width="0.8" stroke-linejoin="round"/><path d="M4.4 14.6 C4.4 13.8 5 13.3 5.85 13.3 C6.7 13.3 7.3 13.8 7.3 14.6 V16.3 H16.6 V14.6 C16.6 13.8 17.2 13.3 18.05 13.3 C18.9 13.3 19.5 13.8 19.5 14.6 V18.7 C19.5 19.3 19.1 19.7 18.5 19.7 H5.4 C4.8 19.7 4.4 19.3 4.4 18.7 Z"/></g></svg></div>
<div style="position:absolute;left:1173px;top:524px;width:250px;height:130px;border:1px solid #d3a800;border-radius:10px;background:#fff"></div>
<div style="position:absolute;left:1187px;top:545px;line-height:0"><svg width="19" height="25" viewBox="0 0 19 25"><path d="M2.8 0 H10.9 V5 C10.9 6 11.6 6.6 12.5 6.6 H18.7 V21.6 C18.7 23.2 17.4 24.4 15.9 24.4 H2.8 C1.2 24.4 0 23.2 0 21.6 V2.8 C0 1.2 1.2 0 2.8 0 Z" fill="#4d4d4d"/><path d="M12.3 0 L18.1 5.6 H12.3 Z" fill="#4d4d4d"/><rect x="3" y="9.3" width="12" height="1.7" fill="#fff"/><rect x="3" y="13.2" width="12" height="1.7" fill="#fff"/><rect x="3" y="17" width="5" height="1.7" fill="#fff"/></svg></div>
<div style="position:absolute;left:1346px;top:545px;width:66px;height:23px;border-radius:6px;background:linear-gradient(180deg,#fbdc00,#d4a700);box-shadow:0 3px 7px rgba(0,0,0,0.18)"></div>
<span class="t" style="left:1353.80px;top:551.57px;font-size:10.2px;font-weight:400;color:#4a4632;letter-spacing:0.854px;-webkit-text-stroke:0.3px #4a4632;will-change:transform;">Approved</span>
<span class="t" style="left:1183.90px;top:587.44px;font-size:12px;font-weight:400;color:#6b6b6b;letter-spacing:0.55px;will-change:transform;">Last Education</span>
<span class="t" style="left:1183.90px;top:602.44px;font-size:12px;font-weight:400;color:#6b6b6b;letter-spacing:0.55px;will-change:transform;">certificate or</span>
<span class="t" style="left:1183.90px;top:617.44px;font-size:12px;font-weight:400;color:#6b6b6b;letter-spacing:0.55px;will-change:transform;">mark-sheet</span>
<div style="position:absolute;left:1346px;top:585px;line-height:0"><svg width="24" height="24" viewBox="0 0 24 24"><defs><linearGradient id="dlg" x1="0" y1="0" x2="1" y2="1"><stop offset="0" stop-color="#2a93ff"/><stop offset="1" stop-color="#0038a8"/></linearGradient></defs><rect width="24" height="24" rx="6" fill="url(#dlg)"/><g fill="#fff"><rect x="10.3" y="4.3" width="3.4" height="8.5" rx="1.7"/><path d="M8.4 11 H15.6 L12 15 Z" stroke="#fff" stroke-width="0.8" stroke-linejoin="round"/><path d="M4.4 14.6 C4.4 13.8 5 13.3 5.85 13.3 C6.7 13.3 7.3 13.8 7.3 14.6 V16.3 H16.6 V14.6 C16.6 13.8 17.2 13.3 18.05 13.3 C18.9 13.3 19.5 13.8 19.5 14.6 V18.7 C19.5 19.3 19.1 19.7 18.5 19.7 H5.4 C4.8 19.7 4.4 19.3 4.4 18.7 Z"/></g></svg></div>
<div style="position:absolute;left:331px;top:674px;width:250px;height:127px;border:1px solid #d3a800;border-radius:10px;background:#fff"></div>
<div style="position:absolute;left:347.5px;top:697px;line-height:0"><svg width="15" height="21" viewBox="0 0 15 21"><path d="M0 0 H10.8 L11.2 0.4 V3.6 H14.3 V20.3 H0 Z" fill="#4d4d4d"/><path d="M11.6 0.3 L14.3 3.2 H11.6 Z" fill="#4d4d4d"/><path d="M6.2 1.3 H8.4 V3.5 H10.6 V5.7 H8.4 V7.9 H6.2 V5.7 H4 V3.5 H6.2 Z" fill="#4d4d4d" stroke="#fff" stroke-width="0.9"/><g fill="#fff"><rect x="1.9" y="9.3" width="10.3" height="0.9"/><rect x="1.9" y="12.2" width="10.3" height="0.9"/><rect x="1.9" y="14.9" width="10.3" height="0.9"/><rect x="1.9" y="17.5" width="10.3" height="0.9"/></g></svg></div>
<div style="position:absolute;left:504px;top:695px;width:66px;height:23px;border-radius:6px;background:linear-gradient(180deg,#fbdc00,#d4a700);box-shadow:0 3px 7px rgba(0,0,0,0.18)"></div>
<span class="t" style="left:511.80px;top:701.57px;font-size:10.2px;font-weight:400;color:#4a4632;letter-spacing:0.854px;-webkit-text-stroke:0.3px #4a4632;will-change:transform;">Approved</span>
<span class="t" style="left:341.90px;top:737.44px;font-size:12px;font-weight:400;color:#6b6b6b;letter-spacing:0.55px;will-change:transform;">Fitness certificate</span>
<span class="t" style="left:341.90px;top:752.44px;font-size:12px;font-weight:400;color:#6b6b6b;letter-spacing:0.55px;will-change:transform;">from registered</span>
<span class="t" style="left:341.90px;top:767.44px;font-size:12px;font-weight:400;color:#6b6b6b;letter-spacing:0.55px;will-change:transform;">physician</span>
<div style="position:absolute;left:504px;top:735px;line-height:0"><svg width="24" height="24" viewBox="0 0 24 24"><defs><linearGradient id="dlg" x1="0" y1="0" x2="1" y2="1"><stop offset="0" stop-color="#2a93ff"/><stop offset="1" stop-color="#0038a8"/></linearGradient></defs><rect width="24" height="24" rx="6" fill="url(#dlg)"/><g fill="#fff"><rect x="10.3" y="4.3" width="3.4" height="8.5" rx="1.7"/><path d="M8.4 11 H15.6 L12 15 Z" stroke="#fff" stroke-width="0.8" stroke-linejoin="round"/><path d="M4.4 14.6 C4.4 13.8 5 13.3 5.85 13.3 C6.7 13.3 7.3 13.8 7.3 14.6 V16.3 H16.6 V14.6 C16.6 13.8 17.2 13.3 18.05 13.3 C18.9 13.3 19.5 13.8 19.5 14.6 V18.7 C19.5 19.3 19.1 19.7 18.5 19.7 H5.4 C4.8 19.7 4.4 19.3 4.4 18.7 Z"/></g></svg></div>
<div style="position:absolute;left:612px;top:674px;width:250px;height:127px;border:1px solid #d3a800;border-radius:10px;background:#fff"></div>
<div style="position:absolute;left:628.5px;top:697px;line-height:0"><svg width="15" height="21" viewBox="0 0 15 21"><path d="M0 0 H10.8 L11.2 0.4 V3.6 H14.3 V20.3 H0 Z" fill="#4d4d4d"/><path d="M11.6 0.3 L14.3 3.2 H11.6 Z" fill="#4d4d4d"/><path d="M6.2 1.3 H8.4 V3.5 H10.6 V5.7 H8.4 V7.9 H6.2 V5.7 H4 V3.5 H6.2 Z" fill="#4d4d4d" stroke="#fff" stroke-width="0.9"/><g fill="#fff"><rect x="1.9" y="9.3" width="10.3" height="0.9"/><rect x="1.9" y="12.2" width="10.3" height="0.9"/><rect x="1.9" y="14.9" width="10.3" height="0.9"/><rect x="1.9" y="17.5" width="10.3" height="0.9"/></g></svg></div>
<div style="position:absolute;left:785px;top:695px;width:66px;height:23px;border-radius:6px;background:linear-gradient(180deg,#fbdc00,#d4a700);box-shadow:0 3px 7px rgba(0,0,0,0.18)"></div>
<span class="t" style="left:792.80px;top:701.57px;font-size:10.2px;font-weight:400;color:#4a4632;letter-spacing:0.854px;-webkit-text-stroke:0.3px #4a4632;will-change:transform;">Approved</span>
<span class="t" style="left:622.90px;top:737.44px;font-size:12px;font-weight:400;color:#6b6b6b;letter-spacing:0.55px;will-change:transform;">Copy of active</span>
<span class="t" style="left:622.90px;top:752.44px;font-size:12px;font-weight:400;color:#6b6b6b;letter-spacing:0.55px;will-change:transform;">Health insurance</span>
<div style="position:absolute;left:785px;top:735px;line-height:0"><svg width="24" height="24" viewBox="0 0 24 24"><defs><linearGradient id="dlg" x1="0" y1="0" x2="1" y2="1"><stop offset="0" stop-color="#2a93ff"/><stop offset="1" stop-color="#0038a8"/></linearGradient></defs><rect width="24" height="24" rx="6" fill="url(#dlg)"/><g fill="#fff"><rect x="10.3" y="4.3" width="3.4" height="8.5" rx="1.7"/><path d="M8.4 11 H15.6 L12 15 Z" stroke="#fff" stroke-width="0.8" stroke-linejoin="round"/><path d="M4.4 14.6 C4.4 13.8 5 13.3 5.85 13.3 C6.7 13.3 7.3 13.8 7.3 14.6 V16.3 H16.6 V14.6 C16.6 13.8 17.2 13.3 18.05 13.3 C18.9 13.3 19.5 13.8 19.5 14.6 V18.7 C19.5 19.3 19.1 19.7 18.5 19.7 H5.4 C4.8 19.7 4.4 19.3 4.4 18.7 Z"/></g></svg></div>
<div style="position:absolute;left:893px;top:674px;width:250px;height:127px;border:1px solid #d3a800;border-radius:10px;background:#fff"></div>
<div style="position:absolute;left:907px;top:695px;line-height:0"><svg width="19" height="25" viewBox="0 0 19 25"><path d="M2.8 0 H10.9 V5 C10.9 6 11.6 6.6 12.5 6.6 H18.7 V21.6 C18.7 23.2 17.4 24.4 15.9 24.4 H2.8 C1.2 24.4 0 23.2 0 21.6 V2.8 C0 1.2 1.2 0 2.8 0 Z" fill="#4d4d4d"/><path d="M12.3 0 L18.1 5.6 H12.3 Z" fill="#4d4d4d"/><rect x="3" y="9.3" width="12" height="1.7" fill="#fff"/><rect x="3" y="13.2" width="12" height="1.7" fill="#fff"/><rect x="3" y="17" width="5" height="1.7" fill="#fff"/></svg></div>
<div style="position:absolute;left:1066px;top:695px;width:66px;height:23px;border-radius:6px;background:linear-gradient(180deg,#fbdc00,#d4a700);box-shadow:0 3px 7px rgba(0,0,0,0.18)"></div>
<span class="t" style="left:1073.80px;top:701.57px;font-size:10.2px;font-weight:400;color:#4a4632;letter-spacing:0.854px;-webkit-text-stroke:0.3px #4a4632;will-change:transform;">Approved</span>
<span class="t" style="left:903.90px;top:737.44px;font-size:12px;font-weight:400;color:#6b6b6b;letter-spacing:0.55px;will-change:transform;">Form 16</span>
<div style="position:absolute;left:1034px;top:735px;line-height:0"><svg width="24" height="24" viewBox="0 0 24 24"><defs><linearGradient id="dlg" x1="0" y1="0" x2="1" y2="1"><stop offset="0" stop-color="#2a93ff"/><stop offset="1" stop-color="#0038a8"/></linearGradient></defs><rect width="24" height="24" rx="6" fill="url(#dlg)"/><g fill="#fff"><rect x="10.3" y="4.3" width="3.4" height="8.5" rx="1.7"/><path d="M8.4 11 H15.6 L12 15 Z" stroke="#fff" stroke-width="0.8" stroke-linejoin="round"/><path d="M4.4 14.6 C4.4 13.8 5 13.3 5.85 13.3 C6.7 13.3 7.3 13.8 7.3 14.6 V16.3 H16.6 V14.6 C16.6 13.8 17.2 13.3 18.05 13.3 C18.9 13.3 19.5 13.8 19.5 14.6 V18.7 C19.5 19.3 19.1 19.7 18.5 19.7 H5.4 C4.8 19.7 4.4 19.3 4.4 18.7 Z"/></g></svg></div>
<div style="position:absolute;left:1173px;top:674px;width:250px;height:127px;border:1px solid #d3a800;border-radius:10px;background:#fff"></div>
<div style="position:absolute;left:1187px;top:695px;line-height:0"><svg width="19" height="25" viewBox="0 0 19 25"><path d="M2.8 0 H10.9 V5 C10.9 6 11.6 6.6 12.5 6.6 H18.7 V21.6 C18.7 23.2 17.4 24.4 15.9 24.4 H2.8 C1.2 24.4 0 23.2 0 21.6 V2.8 C0 1.2 1.2 0 2.8 0 Z" fill="#4d4d4d"/><path d="M12.3 0 L18.1 5.6 H12.3 Z" fill="#4d4d4d"/><rect x="3" y="9.3" width="12" height="1.7" fill="#fff"/><rect x="3" y="13.2" width="12" height="1.7" fill="#fff"/><rect x="3" y="17" width="5" height="1.7" fill="#fff"/></svg></div>
<div style="position:absolute;left:1346px;top:695px;width:66px;height:23px;border-radius:6px;background:linear-gradient(180deg,#fbdc00,#d4a700);box-shadow:0 3px 7px rgba(0,0,0,0.18)"></div>
<span class="t" style="left:1353.80px;top:701.57px;font-size:10.2px;font-weight:400;color:#4a4632;letter-spacing:0.854px;-webkit-text-stroke:0.3px #4a4632;will-change:transform;">Approved</span>
<span class="t" style="left:1183.90px;top:737.44px;font-size:12px;font-weight:400;color:#6b6b6b;letter-spacing:0.55px;will-change:transform;">Form 16</span>
<div style="position:absolute;left:1315px;top:735px;line-height:0"><svg width="24" height="24" viewBox="0 0 24 24"><defs><linearGradient id="dlg" x1="0" y1="0" x2="1" y2="1"><stop offset="0" stop-color="#2a93ff"/><stop offset="1" stop-color="#0038a8"/></linearGradient></defs><rect width="24" height="24" rx="6" fill="url(#dlg)"/><g fill="#fff"><rect x="10.3" y="4.3" width="3.4" height="8.5" rx="1.7"/><path d="M8.4 11 H15.6 L12 15 Z" stroke="#fff" stroke-width="0.8" stroke-linejoin="round"/><path d="M4.4 14.6 C4.4 13.8 5 13.3 5.85 13.3 C6.7 13.3 7.3 13.8 7.3 14.6 V16.3 H16.6 V14.6 C16.6 13.8 17.2 13.3 18.05 13.3 C18.9 13.3 19.5 13.8 19.5 14.6 V18.7 C19.5 19.3 19.1 19.7 18.5 19.7 H5.4 C4.8 19.7 4.4 19.3 4.4 18.7 Z"/></g></svg></div>
<div style="position:absolute;left:331px;top:821px;width:250px;height:112px;border:1px solid #d3a800;border-radius:10px;background:#fff"></div>
<div style="position:absolute;left:345px;top:842px;line-height:0"><svg width="19" height="25" viewBox="0 0 19 25"><path d="M2.8 0 H10.9 V5 C10.9 6 11.6 6.6 12.5 6.6 H18.7 V21.6 C18.7 23.2 17.4 24.4 15.9 24.4 H2.8 C1.2 24.4 0 23.2 0 21.6 V2.8 C0 1.2 1.2 0 2.8 0 Z" fill="#4d4d4d"/><path d="M12.3 0 L18.1 5.6 H12.3 Z" fill="#4d4d4d"/><rect x="3" y="9.3" width="12" height="1.7" fill="#fff"/><rect x="3" y="13.2" width="12" height="1.7" fill="#fff"/><rect x="3" y="17" width="5" height="1.7" fill="#fff"/></svg></div>
<div style="position:absolute;left:504px;top:842px;width:66px;height:23px;border-radius:6px;background:linear-gradient(180deg,#fbdc00,#d4a700);box-shadow:0 3px 7px rgba(0,0,0,0.18)"></div>
<span class="t" style="left:511.80px;top:848.57px;font-size:10.2px;font-weight:400;color:#4a4632;letter-spacing:0.854px;-webkit-text-stroke:0.3px #4a4632;will-change:transform;">Approved</span>
<span class="t" style="left:341.90px;top:884.44px;font-size:12px;font-weight:400;color:#6b6b6b;letter-spacing:0.55px;will-change:transform;">Last three salary</span>
<span class="t" style="left:341.90px;top:899.44px;font-size:12px;font-weight:400;color:#6b6b6b;letter-spacing:0.55px;will-change:transform;">slips</span>
<div style="position:absolute;left:504px;top:882px;line-height:0"><svg width="24" height="24" viewBox="0 0 24 24"><defs><linearGradient id="dlg" x1="0" y1="0" x2="1" y2="1"><stop offset="0" stop-color="#2a93ff"/><stop offset="1" stop-color="#0038a8"/></linearGradient></defs><rect width="24" height="24" rx="6" fill="url(#dlg)"/><g fill="#fff"><rect x="10.3" y="4.3" width="3.4" height="8.5" rx="1.7"/><path d="M8.4 11 H15.6 L12 15 Z" stroke="#fff" stroke-width="0.8" stroke-linejoin="round"/><path d="M4.4 14.6 C4.4 13.8 5 13.3 5.85 13.3 C6.7 13.3 7.3 13.8 7.3 14.6 V16.3 H16.6 V14.6 C16.6 13.8 17.2 13.3 18.05 13.3 C18.9 13.3 19.5 13.8 19.5 14.6 V18.7 C19.5 19.3 19.1 19.7 18.5 19.7 H5.4 C4.8 19.7 4.4 19.3 4.4 18.7 Z"/></g></svg></div>
<div style="position:absolute;left:1489px;top:310px;width:412px;height:403px;background:#fff;border-radius:20px;box-shadow:0 0 12px rgba(0,0,0,0.07)"></div>
<span class="t" style="left:1515.00px;top:336.88px;font-size:16.8px;font-weight:400;color:#4d4d4d;letter-spacing:0.886px;will-change:transform;">Upload Your Documents</span>
<svg style="position:absolute;left:1554px;top:374px" width="272" height="272" viewBox="0 0 272 272"><circle cx="136" cy="136" r="116" fill="none" stroke="#d6ad00" stroke-width="40"/><rect x="135" y="0" width="2" height="41" fill="#fff"/></svg>
<span class="t" style="left:1637.00px;top:488.26px;font-size:39.5px;font-weight:400;color:#4d4d4d;-webkit-text-stroke:1.5px #4d4d4d;letter-spacing:1.3px;will-change:transform;">100%</span>
<svg style="position:absolute;left:1880px;top:130px" width="28" height="27" viewBox="0 0 28 27"><path d="M9.8 2.5 H4.6 C3.4 2.5 2.5 3.4 2.5 4.6 V22.2 C2.5 23.4 3.4 24.3 4.6 24.3 H9.8" fill="none" stroke="#4d4d4d" stroke-width="2.7" stroke-linecap="round" stroke-linejoin="round"/><path d="M7.4 13.4 H24.8 M19.4 6.6 L25.6 13.4 L19.4 20" fill="none" stroke="#4d4d4d" stroke-width="2.7" stroke-linecap="round" stroke-linejoin="round"/></svg>
<div style="position:absolute;left:1837px;top:971px;width:48px;height:48px;border-radius:50%;background:#f1f1f1;box-shadow:0 0 5px rgba(0,0,0,0.07)"></div>
<div style="position:absolute;left:1841px;top:975px;width:40px;height:40px;border-radius:50%;background:#4d4d4d"></div>
<svg style="position:absolute;left:1845px;top:989px" width="31" height="12" viewBox="0 0 31 12"><g fill="#ffe000"><path d="M1 1 H30 L29 2.8 H1 Z"/><path d="M1 5 H28.5 L27.6 6.8 H1 Z"/><path d="M1 9 H27 L26.2 10.8 H1 Z"/></g></svg>
</div></body></html>
